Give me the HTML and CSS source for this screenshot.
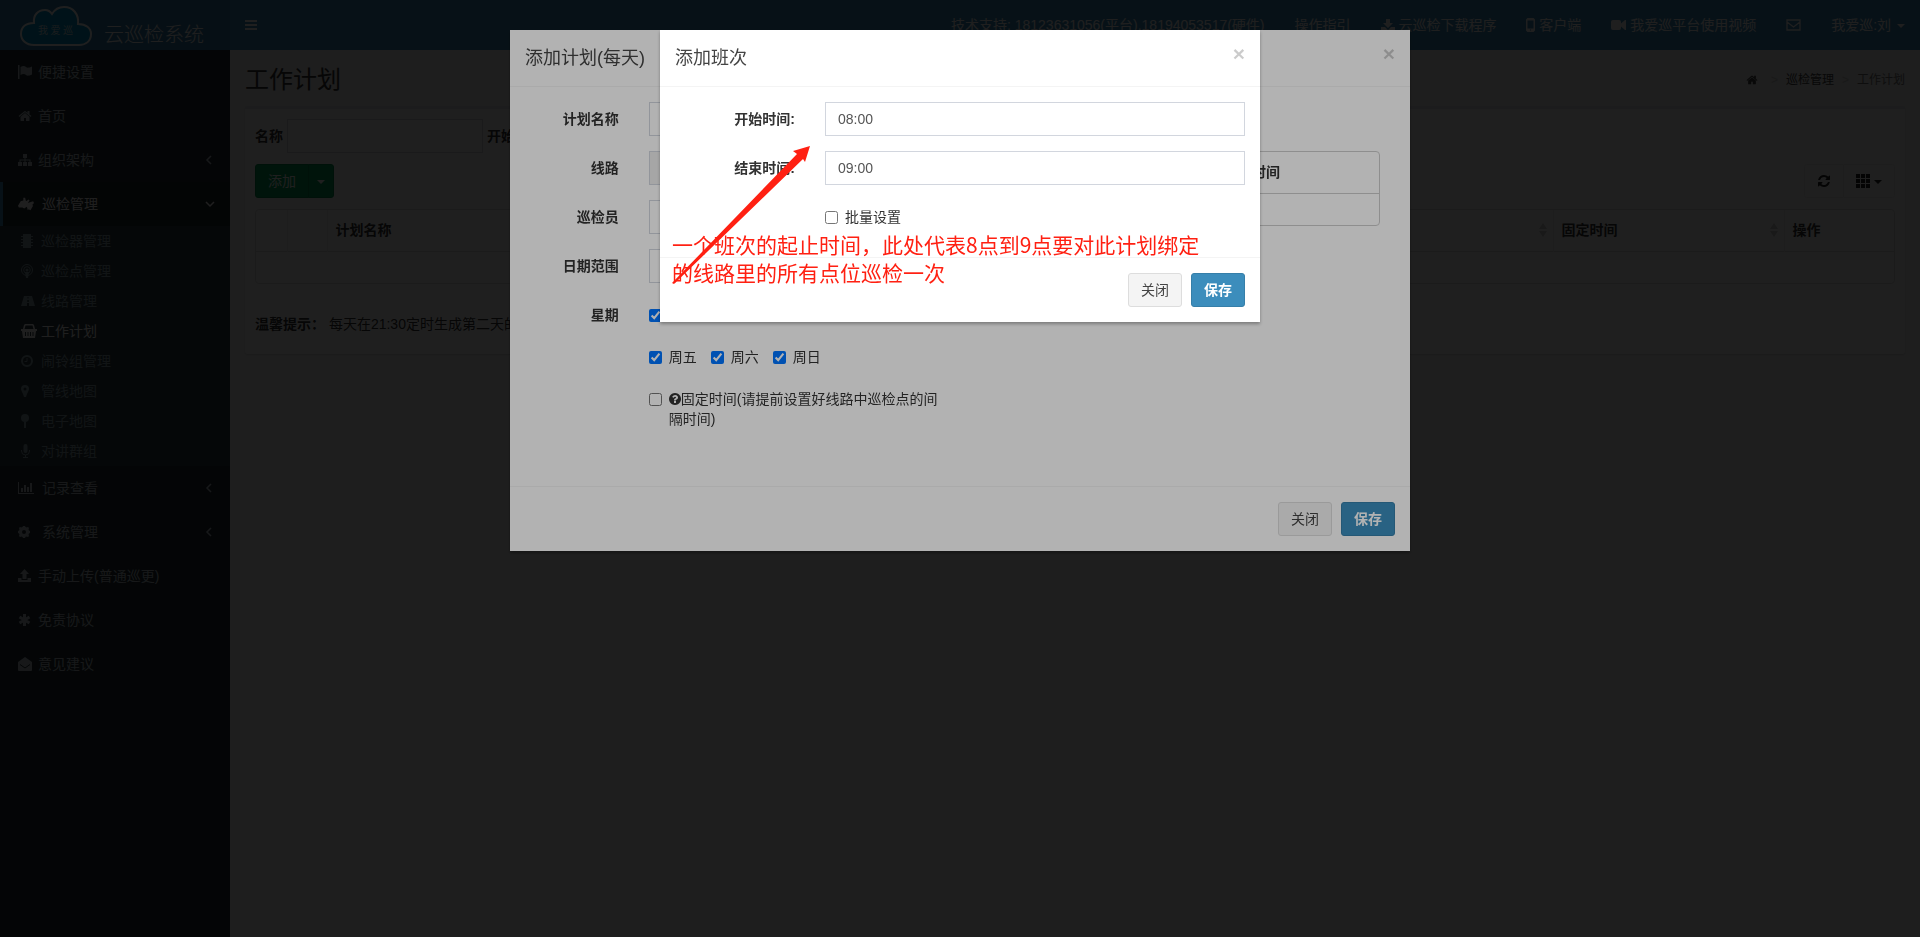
FILE: index.html
```html
<!DOCTYPE html>
<html lang="zh-CN">
<head>
    <meta charset="UTF-8">
    <meta name="viewport" content="width=device-width, initial-scale=1.0">
    <title>云巡检系统</title>
    <link rel="stylesheet" href="styles.css">
</head>
<body>
    <!-- icons used more than once -->
    <svg class="sprite" aria-hidden="true">
        <symbol id="i-home" viewBox="0 0 1792 1792"><path d="M1472 992v480q0 26-19 45t-45 19h-384v-384h-256v384h-384q-26 0-45-19t-19-45v-480q0-1 .5-3t.5-3l575-474 575 474q1 2 1 6zm223-69l-62 74q-8 9-21 11h-3q-13 0-21-7l-692-577-692 577q-12 8-24 7-13-2-21-11l-62-74q-8-10-7-23.5t11-21.5l719-599q32-26 76-26t76 26l244 204v-195q0-14 9-23t23-9h192q14 0 23 9t9 23v408l219 182q10 8 11 21.5t-7 23.5z"/></symbol>
        <symbol id="i-left" viewBox="0 0 14 14"><path d="M7 3L3 7l4 4" fill="none" stroke="currentColor" stroke-width="1.5"/></symbol>
        <symbol id="i-down" viewBox="0 0 14 14"><path d="M2 5l4 4 4-4" fill="none" stroke="currentColor" stroke-width="1.5"/></symbol>
        <symbol id="i-sort" viewBox="0 0 8 14"><path d="M4 0l4 6H0zM0 8h8l-4 6z"/></symbol>
    </svg>

    <header class="main-header">
        <a href="#" class="logo">
            <svg class="logo-cloud" viewBox="0 0 72 40" aria-hidden="true">
                <path d="M14 39C6 39 1 34 1 28c0-7 5-11 13-11C13 9 18 4 25 4c3 0 5 1 7 4C35 3 39 1 44 1c9 0 15 7 14 17 8 0 13 4 13 10 0 7-5 11-12 11z" fill="#0094c8" stroke="#fff" stroke-width="2"/>
                <text x="18" y="28" class="logo-mini">我 爱 巡</text>
            </svg>
            <span class="logo-text">云巡检系统</span>
        </a>
        <nav class="navbar">
            <button type="button" class="sidebar-toggle" aria-label="菜单">
                <svg width="12" height="10" viewBox="0 0 12 10"><path d="M0 0h12v2H0zM0 4h12v2H0zM0 8h12v2H0z"/></svg>
            </button>
            <div class="navbar-menu">
                <a href="#">技术支持: 18123631056(平台),18194053517(硬件)</a>
                <a href="#">操作指引</a>
                <a href="#"><svg class="icon" viewBox="0 0 14 14"><path d="M5 1h4v4h3L7 10 2 5h3zM0 9h4l3 3 3-3h4v4H0z"/></svg> 云巡检下载程序</a>
                <a href="#"><svg class="icon icon-phone" viewBox="0 0 9 14"><path fill-rule="evenodd" d="M1.500 0h6L9 1.500v11L7.500 14h-6L0 12.500v-11zM1.500 2.500v8h6v-8zM4 11.500v1h1v-1z"/></svg> 客户端</a>
                <a href="#"><svg class="icon icon-video" viewBox="0 0 15 14"><path d="M2 2h6q2 0 2 2v1.500L14 2h1v10h-1l-4-3.500V10q0 2-2 2H2q-2 0-2-2V4q0-2 2-2z"/></svg> 我爱巡平台使用视频</a>
                <a href="#" aria-label="消息"><svg class="icon icon-video" viewBox="0 0 15 14"><path d="M1 2h13v10H1zM1 4l6.500 5L14 4" fill="none" stroke="currentColor" stroke-width="1.300"/></svg></a>
                <a href="#">我爱巡:刘 <span class="caret user-caret"></span></a>
            </div>
        </nav>
    </header>

    <div class="wrapper">
        <aside class="sidebar">
            <a href="#"><svg class="icon" viewBox="0 0 14 14"><path d="M0 0h1.500v14H0zM2.500 2C5 .500 7 1 8 2s3 1 6-.500v8c-3 1.500-5 1.500-6 .500s-3-1.500-5.500 0z"/></svg>便捷设置</a>
            <a href="#"><svg class="icon"><use href="#i-home"/></svg>首页</a>
            <a href="#"><svg class="icon" viewBox="0 0 14 14"><path d="M5 1h4v4H7.500v1.500h5V9H14v4h-4V9h1.500V7.500h-4V9H9v4H5V9h1.500V7.500h-4V9H4v4H0V9h1.500V6.500h5V5H5z"/></svg>组织架构<svg class="arrow"><use href="#i-left"/></svg></a>
            <a href="#" class="active wide"><svg class="icon" viewBox="0 0 18 14"><path d="M0 9l3-5 3-1V0h2l1 4 3-2 1 1-2 3 6-2 1 2-2 2 1 1-3 5-2-1-1 1-1-4-3 2-2-1H1z"/></svg>巡检管理<svg class="arrow"><use href="#i-down"/></svg></a>
            <div class="treeview-menu">
                <a href="#"><svg class="icon" viewBox="0 0 14 14"><path d="M2 0h8v14H2zM0 2h12v1H0zM0 5h12v1H0zM0 8h12v1H0zM0 11h12v1H0z"/></svg>巡检器管理</a>
                <a href="#"><svg class="icon" viewBox="0 0 14 14"><circle cx="6" cy="6" r="5.500" fill="none" stroke="currentColor"/><circle cx="6" cy="6" r="3.300" fill="none" stroke="currentColor"/><circle cx="6" cy="6" r="1.500"/><path d="M4 8h4l-1 6H5z"/></svg>巡检点管理</a>
                <a href="#"><svg class="icon" viewBox="0 0 14 14"><path fill-rule="evenodd" d="M3 2h8l3 10H8V9H6v3H0zM6.500 3v1.500h1V3zM6.300 6v2h1.500V6z"/></svg>线路管理</a>
                <a href="#" class="current"><svg class="icon icon-basket" viewBox="0 0 16 14"><path fill-rule="evenodd" d="M0 5h2l1-4 1-1h8l1 1 1 4h2v2h-1l-1 7H2L1 7H0zM3.500 5h9l-1-3.500h-7zM4 8v4h1V8zM6.500 8v4h1V8zM9 8v4h1V8zM11.500 8v4h1V8z"/></svg>工作计划</a>
                <a href="#"><svg class="icon" viewBox="0 0 14 14"><circle cx="6" cy="7" r="5" fill="none" stroke="currentColor" stroke-width="2"/><path d="M6 4v3.500H3.500" fill="none" stroke="currentColor"/></svg>闹铃组管理</a>
                <a href="#"><svg class="icon" viewBox="0 0 14 14"><path fill-rule="evenodd" d="M4 1a4 4 0 0 1 4 4c0 2-2 4-3 8H3C2 9 0 7 0 5a4 4 0 0 1 4-4zm0 2.500a1.500 1.500 0 1 0 0 3 1.500 1.500 0 0 0 0-3z"/></svg>管线地图</a>
                <a href="#"><svg class="icon" viewBox="0 0 14 14"><circle cx="4" cy="4" r="4"/><path d="M3 8h2v6H3z"/></svg>电子地图</a>
                <a href="#"><svg class="icon" viewBox="0 0 14 14"><rect x="2.500" y="0" width="4" height="9" rx="2"/><path d="M.500 6v1a4 4 0 0 0 8 0V6M4.500 11v2.500M2 13.500h5" fill="none" stroke="currentColor"/></svg>对讲群组</a>
            </div>
            <a href="#" class="wide"><svg class="icon icon-basket" viewBox="0 0 16 14"><path d="M0 1h1v11h15v1H0zM3 7h2v4H3zM6 4h2v7H6zM9 6h2v5H9zM12 2h2v9h-2z"/></svg>记录查看<svg class="arrow"><use href="#i-left"/></svg></a>
            <a href="#" class="wide"><svg class="icon" viewBox="0 0 16 14"><circle cx="6" cy="7" r="3.500" fill="none" stroke="currentColor" stroke-width="3"/><path d="M5 1h2l1 2H4zM5 13h2l1-2H4zM0 6v2l2 1V5zM12 6v2l-2 1V5zM1 3l1-1 3 1-3 3zM11 3l-1-1-3 1 3 3zM1 11l1 1 3-1-3-3zM11 11l-1 1-3-1 3-3z"/></svg>系统管理<svg class="arrow"><use href="#i-left"/></svg></a>
            <a href="#"><svg class="icon" viewBox="0 0 14 14"><path d="M6.500 0L11 5H8.500v5h-4V5H2zM0 9h3.500v2h6V9H13v4H0z"/></svg>手动上传(普通巡更)</a>
            <a href="#"><svg class="icon" viewBox="0 0 14 14"><path d="M6.500 1v12M1.500 4l10 6M11.500 4l-10 6" fill="none" stroke="currentColor" stroke-width="3"/></svg>免责协议</a>
            <a href="#"><svg class="icon" viewBox="0 0 14 14"><path d="M0 5l7-5 7 5v8q0 1-1 1H1q-1 0-1-1z"/><path d="M2 7.500L7 11l5-3.500" fill="none" stroke="#222d32"/></svg>意见建议</a>
        </aside>

        <main class="content">
            <div class="content-header">
                <h1>工作计划</h1>
                <div class="breadcrumb">
                    <a href="#" class="home" aria-label="首页"><svg class="icon"><use href="#i-home"/></svg></a>
                    <i>&gt;</i>
                    <a href="#">巡检管理</a>
                    <i>&gt;</i>
                    <span>工作计划</span>
                </div>
            </div>

            <div class="box">
                <form class="search">
                    <label for="name">名称</label>
                    <input type="text" id="name" class="form-control">
                    <label>开始时间</label>
                </form>
                <div class="toolbar">
                    <div class="btn-group">
                        <button type="button" class="btn btn-success">添加</button>
                        <button type="button" class="btn btn-success btn-caret" aria-label="更多"><span class="caret"></span></button>
                    </div>
                    <div class="btn-group">
                        <button type="button" class="btn btn-default" aria-label="刷新"><svg class="icon" viewBox="0 0 1792 1792"><path d="M1639 1056q0 5-1 7-64 268-268 434.500t-478 166.500q-146 0-282.500-55t-243.500-157l-129 129q-19 19-45 19t-45-19-19-45v-448q0-26 19-45t45-19h448q26 0 45 19t19 45-19 45l-137 137q71 66 161 102t187 36q134 0 250-65t186-179q11-17 53-117 8-23 30-23h192q13 0 22.500 9.500t9.500 22.500zm25-800v448q0 26-19 45t-45 19h-448q-26 0-45-19t-19-45 19-45l138-138q-148-137-349-137-134 0-250 65t-186 179q-11 17-53 117-8 23-30 23h-199q-13 0-22.500-9.500t-9.500-22.500v-7q65-268 270-434.500t480-166.500q146 0 284 55.500t245 156.500l130-129q19-19 45-19t45 19 19 45z"/></svg></button>
                        <button type="button" class="btn btn-default" aria-label="列"><svg class="icon" viewBox="0 0 14 14"><path d="M0 0h4v4H0zM5 0h4v4H5zM10 0h4v4h-4zM0 5h4v4H0zM5 5h4v4H5zM10 5h4v4h-4zM0 10h4v4H0zM5 10h4v4H5zM10 10h4v4h-4z"/></svg> <span class="caret"></span></button>
                    </div>
                </div>
                <div class="table-wrap">
                    <table class="table">
                        <colgroup><col class="c-check"><col class="c-index"><col><col class="c-fixed"><col class="c-action"></colgroup>
                        <thead>
                            <tr>
                                <th></th>
                                <th></th>
                                <th><div class="th-inner">计划名称<svg class="sort"><use href="#i-sort"/></svg></div></th>
                                <th><div class="th-inner">固定时间<svg class="sort"><use href="#i-sort"/></svg></div></th>
                                <th>操作</th>
                            </tr>
                        </thead>
                        <tbody>
                            <tr><td colspan="5"></td></tr>
                        </tbody>
                    </table>
                </div>
                <p class="tip"><b>温馨提示：</b> 每天在21:30定时生成第二天的计划</p>
            </div>
        </main>
    </div>

    <!-- plan modal -->
    <div class="backdrop backdrop-page"></div>
    <div class="modal">
        <div class="modal-dialog modal-lg">
            <div class="modal-header">
                <h4>添加计划(每天)</h4>
                <button type="button" class="close" aria-label="关闭">×</button>
            </div>
            <div class="modal-body plan">
                <form class="plan-form">
                    <div class="form-group">
                        <label for="planName">计划名称</label>
                        <div class="field"><input type="text" id="planName" class="form-control"></div>
                    </div>
                    <div class="form-group">
                        <label for="line">线路</label>
                        <div class="field"><input type="text" id="line" class="form-control" readonly></div>
                    </div>
                    <div class="form-group">
                        <label for="person">巡检员</label>
                        <div class="field"><input type="text" id="person" class="form-control"></div>
                    </div>
                    <div class="form-group">
                        <label for="range">日期范围</label>
                        <div class="field"><input type="text" id="range" class="form-control"></div>
                    </div>
                    <div class="form-group">
                        <label for="mon">星期</label>
                        <div class="field checks">
                            <input type="checkbox" id="mon" checked>
                        </div>
                    </div>
                    <div class="form-group">
                        <div class="field checks offset">
                            <label><input type="checkbox" checked>周五</label>
                            <label><input type="checkbox" checked>周六</label>
                            <label><input type="checkbox" checked>周日</label>
                        </div>
                    </div>
                    <div class="form-group">
                        <div class="field checks offset">
                            <label><input type="checkbox"><span><svg class="icon-question" viewBox="128 128 1536 1536"><path d="M1024 1376v-192q0-14-9-23t-23-9h-192q-14 0-23 9t-9 23v192q0 14 9 23t23 9h192q14 0 23-9t9-23zm256-672q0-88-55.500-163t-138.500-116-170-41q-243 0-371 213-15 24 8 42l132 100q7 6 19 6 16 0 25-12 53-68 86-92 34-24 86-24 48 0 85.500 26t37.500 59q0 38-20 61t-68 45q-63 28-115.500 86.500t-52.500 125.500v36q0 14 9 23t23 9h192q14 0 23-9t9-23q0-19 21.500-49.500t54.500-49.500q32-18 49-28.500t46-35 44.500-48 28-60.500 12.500-81zm384 192q0 209-103 385.500t-279.500 279.500-385.500 103-385.500-103-279.500-279.500-103-385.500 103-385.500 279.500-279.500 385.500-103 385.500 103 279.500 279.500 103 385.500z"/></svg>固定时间(请提前设置好线路中巡检点的间隔时间)</span></label>
                        </div>
                    </div>
                </form>
                <div class="plan-shifts">
                    <div class="table-wrap">
                        <table class="table">
                            <thead><tr><th class="end-time">结束时间</th></tr></thead>
                            <tbody><tr><td></td></tr></tbody>
                        </table>
                    </div>
                </div>
            </div>
            <div class="modal-footer">
                <button type="button" class="btn btn-default">关闭</button>
                <button type="button" class="btn btn-primary">保存</button>
            </div>
        </div>
    </div>

    <!-- shift modal -->
    <div class="backdrop"></div>
    <div class="modal">
        <div class="modal-dialog">
            <div class="modal-header">
                <h4>添加班次</h4>
                <button type="button" class="close" aria-label="关闭">×</button>
            </div>
            <form class="modal-body">
                <div class="form-group">
                    <label for="start">开始时间:</label>
                    <div class="field"><input type="text" id="start" class="form-control" value="08:00"></div>
                </div>
                <div class="form-group">
                    <label for="end">结束时间:</label>
                    <div class="field"><input type="text" id="end" class="form-control" value="09:00"></div>
                </div>
                <div class="form-group">
                    <div class="field checks offset">
                        <label><input type="checkbox">批量设置</label>
                    </div>
                </div>
            </form>
            <div class="modal-footer">
                <button type="button" class="btn btn-default">关闭</button>
                <button type="button" class="btn btn-primary">保存</button>
            </div>
            <svg class="note-arrow" viewBox="0 0 140 140" aria-hidden="true"><path d="M0 138L125 9 121 6 138 1 133 17 131 14 2 139z"/></svg>
            <p class="note">一个班次的起止时间，此处代表8点到9点要对此计划绑定<br>的线路里的所有点位巡检一次</p>
        </div>
    </div>
</body>
</html>
```
FILE: styles.css
```css
* {
    box-sizing: border-box;
}

body {
    margin: 0;
    min-height: 100vh;
    display: flex;
    flex-direction: column;
    font-family: "Liberation Sans", Arial, "Noto Sans CJK SC", sans-serif;
    font-size: 14px;
    line-height: 20px;
    color: #333;
    background-color: #f0f0f0;
}

a {
    color: inherit;
    text-decoration: none;
}

button, input {
    font: inherit;
}

svg {
    fill: currentColor;
}

.sprite {
    display: none;
}

.icon {
    width: 14px;
    height: 14px;
    flex: none;
    vertical-align: -2px;
}

.icon-phone {
    width: 9px;
}

.icon-video {
    width: 15px;
}

.caret {
    display: inline-block;
    border-top: 4px solid;
    border-left: 4px solid transparent;
    border-right: 4px solid transparent;
    vertical-align: middle;
}

.user-caret {
    margin-left: 2px;
}

/* header */
.main-header {
    display: flex;
    height: 50px;
    color: #fff;
    background-color: #3c8dbc;
}

.logo {
    display: flex;
    width: 230px;
    padding: 6px 0 0 20px;
    background-color: #367fa9;
}

.logo-cloud {
    width: 72px;
    height: 40px;
    margin-right: 12px;
}

.logo-mini {
    font-family: "Liberation Serif", "Noto Sans CJK SC", serif;
    font-size: 10px;
    fill: #cfe4ee;
}

.logo-text {
    font-size: 20px;
    font-weight: 300;
    line-height: 24px;
    padding-top: 17px;
}

.navbar {
    flex: 1;
    display: flex;
    justify-content: space-between;
}

.sidebar-toggle {
    padding: 0 15px;
    border: 0;
    color: #fff;
    background: none;
}

.sidebar-toggle svg {
    display: block;
}

.navbar-menu {
    display: flex;
    white-space: nowrap;
}

.navbar-menu a {
    padding: 15px;
}

/* sidebar */
.wrapper {
    flex: 1;
    display: flex;
}

.sidebar {
    width: 230px;
    flex: none;
    color: #b8c7ce;
    background-color: #222d32;
}

.sidebar a {
    display: flex;
    align-items: center;
    gap: 6px;
    height: 44px;
    padding: 0 12px 0 15px;
    border-left: 3px solid transparent;
}

.sidebar .icon-basket {
    width: 16px;
}

.sidebar a.wide {
    gap: 8px;
}

.sidebar a.wide .icon {
    width: 16px;
}

.sidebar a.active {
    color: #fff;
    background-color: #1e282c;
    border-left-color: #3c8dbc;
}

.arrow {
    width: 14px;
    height: 14px;
    margin-left: auto;
}

.treeview-menu {
    color: #8aa4af;
    background-color: #2c3b41;
}

.treeview-menu a {
    height: 30px;
    padding-left: 18px;
}

.treeview-menu a.current {
    color: #fff;
    gap: 4px;
}

/* content */
.content {
    flex: 1;
    padding: 15px;
}

.content-header {
    display: flex;
    justify-content: space-between;
    align-items: center;
    margin-bottom: 12px;
}

.content-header h1 {
    margin: 0;
    font-size: 24px;
    font-weight: 400;
    line-height: 29px;
}

.breadcrumb {
    display: flex;
    align-items: center;
    gap: 8px;
    font-size: 12px;
    color: #777;
}

.breadcrumb a {
    color: #444;
}

.breadcrumb .home {
    margin-right: 5px;
}

.breadcrumb .icon {
    width: 12px;
    height: 12px;
}

.breadcrumb i {
    font-style: normal;
    color: #ccc;
}

.box {
    padding: 10px;
    background-color: #fff;
    border-top: 3px solid #e2e4e8;
    border-radius: 3px;
    box-shadow: 0 1px 1px rgba(0, 0, 0, 0.1);
}

.search {
    display: flex;
    align-items: center;
    gap: 4px;
    font-weight: 700;
}

.search .form-control {
    width: 196px;
}

.form-control {
    display: block;
    width: 100%;
    height: 34px;
    padding: 6px 12px;
    font-size: 14px;
    color: #555;
    background-color: #fff;
    border: 1px solid #d2d6de;
    border-radius: 0;
}

.form-control:focus {
    outline: none;
    border-color: #3c8dbc;
}

.form-control[readonly] {
    background-color: #eee;
}

.toolbar {
    display: flex;
    justify-content: space-between;
    padding: 11px 0;
}

.btn-group {
    display: flex;
}

.btn {
    height: 34px;
    padding: 6px 12px;
    border: 1px solid;
    border-radius: 3px;
    cursor: pointer;
}

.btn-group .btn:first-child {
    border-radius: 3px 0 0 3px;
}

.btn-group .btn:last-child {
    border-radius: 0 3px 3px 0;
    margin-left: -1px;
}

.btn-success {
    color: #fff;
    background-color: #00a65a;
    border-color: #008d4c;
}

.btn-caret {
    padding: 6px 8px;
}

.btn-default {
    color: #444;
    background-color: #f4f4f4;
    border-color: #ddd;
}

.btn-primary {
    color: #fff;
    background-color: #3c8dbc;
    border-color: #367fa9;
    font-weight: 700;
}

.box .btn-default {
    color: #222;
    background-color: #fcfcfc;
    border-color: #eee;
}

.table-wrap {
    border: 1px solid #ddd;
    border-radius: 4px;
}

.table {
    width: 100%;
    border-collapse: collapse;
    table-layout: fixed;
}

.table th {
    height: 41px;
    padding: 0 6px 0 8px;
    text-align: left;
    border-left: 1px solid #eee;
}

.table th:first-child {
    border-left: 0;
}

.table td {
    height: 32px;
    padding: 0;
    border-top: 1px solid #ddd;
}

.c-check {
    width: 31px;
}

.c-index {
    width: 40px;
}

.c-fixed {
    width: 231px;
}

.c-action {
    width: 110px;
}

.th-inner {
    display: flex;
    align-items: center;
    justify-content: space-between;
}

.sort {
    width: 8px;
    height: 14px;
    color: #ccc;
}

.tip {
    margin: 30px 0 10px;
}

/* modals */
.backdrop {
    position: fixed;
    inset: 0;
    background-color: rgba(0, 0, 0, 0.3);
}

.backdrop-page {
    background-color: rgba(0, 0, 0, 0.826);
}

.modal {
    position: fixed;
    inset: 0;
    overflow: auto;
}

.modal-dialog {
    position: relative;
    max-width: 600px;
    margin: 30px auto;
    background-color: #fff;
    box-shadow: 0 2px 3px rgba(0, 0, 0, 0.3);
}

.modal-lg {
    max-width: 900px;
}

.modal-header {
    display: flex;
    justify-content: space-between;
    align-items: flex-start;
    padding: 15px;
    border-bottom: 1px solid #f4f4f4;
}

.modal-header h4 {
    margin: 0;
    font-size: 18px;
    font-weight: 400;
    line-height: 26px;
    color: #444;
}

.close {
    padding: 0;
    border: 0;
    background: none;
    color: #000;
    opacity: 0.2;
    font-size: 21px;
    font-weight: 700;
    line-height: 18px;
}

.modal-body {
    padding: 15px 0;
}

.form-group {
    display: flex;
    margin-bottom: 15px;
}

.form-group > label {
    width: 25%;
    padding: 7px 15px 0;
    font-weight: 700;
    text-align: right;
}

.field {
    width: 75%;
    padding: 0 15px;
}

.offset {
    margin-left: 25%;
}

.checks {
    display: flex;
    gap: 14px;
    padding-top: 7px;
}

.checks input {
    flex: none;
    width: 13px;
    height: 13px;
    margin: 4px 0 0;
}

.checks label {
    display: flex;
    gap: 7px;
}

.icon-question {
    width: 12px;
    height: 12px;
    vertical-align: -1px;
}

.plan {
    display: flex;
    padding: 15px 15px 42px;
}

.plan-form, .plan-shifts {
    width: 50%;
}

.plan-shifts {
    padding: 49px 15px 0;
}

.plan .table .end-time {
    padding-left: 248px;
}

.plan .table-wrap, .plan .table td {
    border-color: #ccc;
}

.modal-footer {
    display: flex;
    justify-content: flex-end;
    gap: 9px;
    padding: 15px;
    border-top: 1px solid #f4f4f4;
}

/* hint drawn over the shift modal */
.note {
    position: absolute;
    top: 200px;
    left: 12px;
    margin: 0;
    font-family: "Noto Sans CJK SC", sans-serif;
    font-size: 21px;
    line-height: 28px;
    color: #ff2012;
    white-space: nowrap;
}

.note-arrow {
    position: absolute;
    top: 115px;
    left: 12px;
    width: 140px;
    height: 140px;
    color: #ff2012;
}
```
